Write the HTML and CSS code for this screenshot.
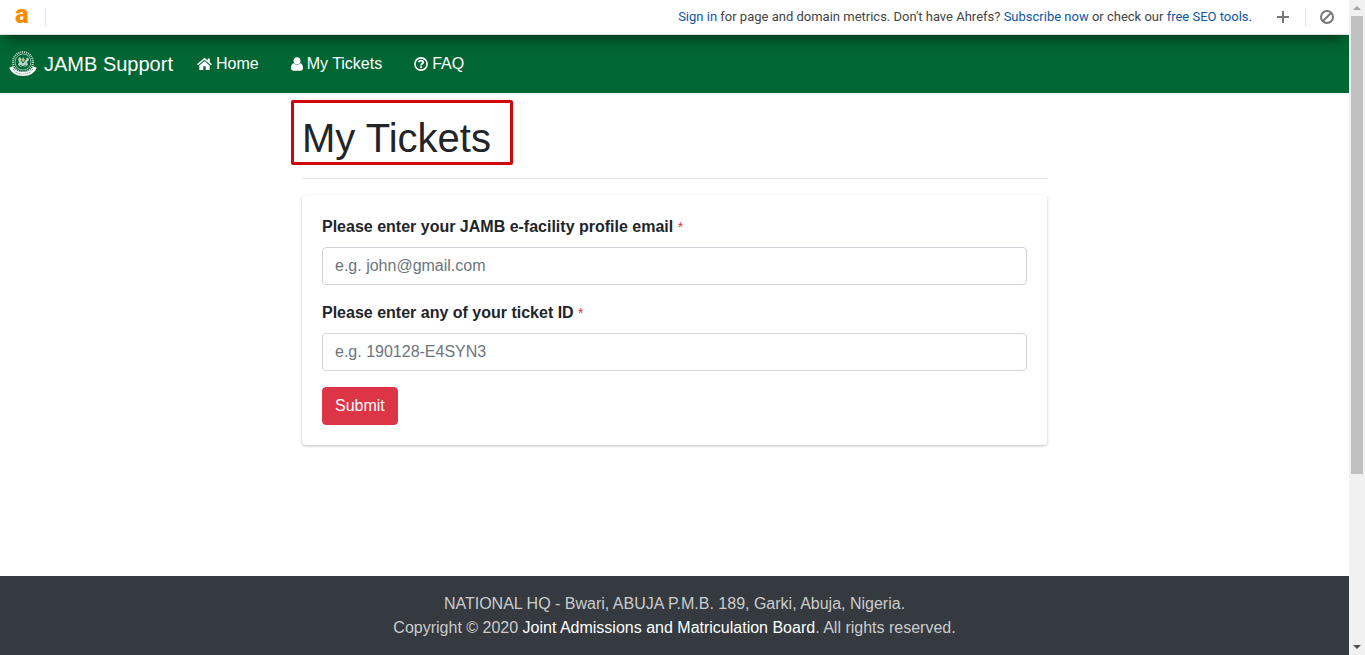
FILE: index.html
```html
<!DOCTYPE html>
<html lang="en">
<head>
    <meta charset="UTF-8">
    <meta name="viewport" content="width=device-width, initial-scale=1.0">
    <title>My Tickets - JAMB Support</title>
    <link rel="stylesheet" href="styles.css">
</head>
<body>

<div class="page">
    <div class="toolbar">
        <a class="toolbar-logo" href="#">a</a>
        <span class="divider"></span>
        <p class="toolbar-text"><a href="#">Sign in</a> for page and domain metrics. Don't have Ahrefs? <a href="#">Subscribe now</a> or check our <a href="#">free SEO tools</a>.</p>
        <button type="button" class="icon-btn" aria-label="Add">
            <svg width="14" height="14" viewBox="0 0 14 14"><path d="M7 1v12M1 7h12" stroke="#777" stroke-width="2"/></svg>
        </button>
        <span class="divider"></span>
        <button type="button" class="icon-btn" aria-label="Disable">
            <svg width="14" height="14" viewBox="0 0 14 14" fill="none" stroke="#777" stroke-width="2"><circle cx="7" cy="7" r="6"/><path d="M3 11l8-8"/></svg>
        </button>
    </div>

    <nav class="navbar">
        <a class="brand" href="#">
            <svg width="28" height="28" viewBox="0 0 28 28" fill="none">
                <circle cx="14" cy="12" r="10" stroke="#cfe0d6" stroke-width="2" stroke-dasharray="1 1"/>
                <circle cx="14" cy="12" r="8" stroke="#8fb8a1"/>
                <path d="M9 9l2-2 2 3 1-3 2 3 3-3 1 3-2 2 1 3-3 2h-4l-3-2 1-3z" fill="#b9d2c3"/>
                <path d="M12 10l2 3 3-4M11 15l3 2 3-2" stroke="#063"/>
                <circle cx="14" cy="10" r="1" fill="#e6b04a"/>
                <path d="M2 17c2 5 7 7 12 7s10-2 12-7" stroke="#fff" stroke-width="4"/>
                <path d="M4 19c3 4 6 5 10 5s7-1 10-5" stroke="#4d8767" stroke-dasharray="1 1"/>
            </svg>
            JAMB Support
        </a>
        <ul class="nav">
            <li><a href="#">
                <svg width="15" height="14" viewBox="0 0 15 14" fill="#fff"><path d="M7.500 0.800L0 7.200l1 1.100 6.500-5.500L14 8.300l1-1.100-2.200-1.900V1.500h-2v2.100zM7.500 4L2.300 8.400V13h4V9.200h2.400V13h4V8.400z"/></svg>
                Home</a></li>
            <li><a href="#">
                <svg width="12" height="14" viewBox="0 0 12 14" fill="#fff"><circle cx="6" cy="3.700" r="3.500"/><path d="M2.700 6.300C.8 6.700 0 8.700 0 11c0 1.700 1 2.700 2.400 2.700h7.200C11 13.700 12 12.700 12 11c0-2.300-.8-4.300-2.700-4.700-2 1.900-4.600 1.900-6.600 0z"/></svg>
                My Tickets</a></li>
            <li><a href="#">
                <svg width="14" height="14" viewBox="0 0 14 14" fill="none" stroke="#fff"><circle cx="7" cy="7" r="6.100" stroke-width="1.600"/><path d="M4.800 5.300c.3-1.200 1.200-1.600 2.200-1.600 1.200 0 2.200.7 2.200 1.700C9.200 6.800 7.100 6.900 7.100 8.400" stroke-width="1.800"/><path d="M7.100 9.300v1.800" stroke-width="2"/></svg>
                FAQ</a></li>
        </ul>
    </nav>

    <main class="container">
        <h1>My Tickets</h1>
        <hr>
        <form class="card">
            <label for="email">Please enter your JAMB e-facility profile email <span class="required">*</span></label>
            <input type="email" id="email" placeholder="e.g. john@gmail.com">
            <label for="ticket">Please enter any of your ticket ID <span class="required">*</span></label>
            <input type="text" id="ticket" placeholder="e.g. 190128-E4SYN3">
            <button type="submit" class="submit-btn">Submit</button>
        </form>
    </main>

    <footer class="footer">
        <p>NATIONAL HQ - Bwari, ABUJA P.M.B. 189, Garki, Abuja, Nigeria.</p>
        <p>Copyright © 2020 <a href="#">Joint Admissions and Matriculation Board</a>. All rights reserved.</p>
    </footer>
</div>

<div class="scrollbar" aria-hidden="true">
    <svg width="16" height="16" viewBox="0 0 16 16"><path d="M4 10l4-4 4 4z" fill="#a3a3a3"/></svg>
    <div class="track"><div class="thumb"></div></div>
    <svg width="16" height="16" viewBox="0 0 16 16"><path d="M4 6l4 4 4-4z" fill="#505050"/></svg>
</div>

</body>
</html>
```
FILE: styles.css
```css
* {
    box-sizing: border-box;
}
body {
    margin: 0;
    display: flex;
    min-height: 100vh;
    font-family: "Liberation Sans", Arial, sans-serif;
    font-size: 16px;
    line-height: 24px;
    color: #212529;
    background-color: #fff;
}
a {
    text-decoration: none;
}
p {
    margin: 0;
}
.page {
    flex: 1;
    min-width: 0;
    display: flex;
    flex-direction: column;
    overflow-x: clip;
}
.toolbar {
    position: relative;
    z-index: 1;
    display: flex;
    align-items: center;
    height: 35px;
    padding: 0 15px;
    background-color: #fff;
    border-bottom: 1px solid #ddd;
    box-shadow: 0 8px 14px -6px rgba(0, 0, 0, 0.6);
    font-family: Roboto, sans-serif;
    font-size: 13px;
    color: #444;
}
.toolbar-logo {
    width: 30px;
    padding-bottom: 6px;
    font-size: 26px;
    font-weight: 900;
    line-height: 28px;
    color: #ff8c00;
}
.divider {
    width: 1px;
    height: 19px;
    background-color: #e5e5e5;
}
.toolbar-text {
    margin-left: auto;
    margin-right: 24px;
}
.toolbar-text a {
    color: #0f55a8;
}
.icon-btn {
    display: flex;
    padding: 0;
    border: none;
    background: none;
    cursor: pointer;
}
.icon-btn + .divider {
    margin: 0 14px 0 15px;
}
.navbar {
    display: flex;
    align-items: center;
    height: 58px;
    padding: 0 9px;
    background-color: #006633;
}
.brand {
    display: flex;
    align-items: center;
    gap: 7px;
    margin-right: 16px;
    font-size: 20px;
    color: #fff;
}
.nav {
    display: flex;
    gap: 16px;
    margin: 0;
    padding: 0;
    list-style: none;
}
.nav a {
    display: flex;
    align-items: center;
    gap: 4px;
    padding: 8px;
    color: #fff;
}
.container {
    flex: 1;
    width: 100%;
    max-width: 745px;
    margin: 0 auto;
    padding-top: 21px;
}
h1 {
    position: relative;
    width: fit-content;
    margin: 0;
    font-size: 40px;
    font-weight: 400;
    line-height: 48px;
}
/* highlight box around the title */
h1::after {
    content: "";
    position: absolute;
    top: -14px;
    right: -22px;
    bottom: -3px;
    left: -11px;
    border: 3px solid #d0060a;
    border-radius: 2px;
}
hr {
    margin: 16px 0;
    border: none;
    border-top: 1px solid #e5e5e5;
}
.card {
    padding: 20px;
    border-radius: 4px;
    background-color: #fff;
    box-shadow: 0 1px 3px rgba(0, 0, 0, 0.25);
}
label {
    display: block;
    margin-bottom: 8px;
    font-weight: 700;
}
.required {
    font-size: 14px;
    font-weight: 400;
    line-height: 20px;
    color: #dc3545;
}
input {
    display: block;
    width: 100%;
    height: 38px;
    margin-bottom: 16px;
    padding: 6px 12px;
    border: 1px solid #ced4da;
    border-radius: 4px;
    font: inherit;
    background-color: #fff;
}
input::placeholder {
    color: #6c757d;
    opacity: 1;
}
.submit-btn {
    display: block;
    padding: 6px 12px;
    border: 1px solid #dc3545;
    border-radius: 4px;
    font: inherit;
    color: #fff;
    background-color: #dc3545;
    cursor: pointer;
}
.submit-btn:hover {
    background-color: #c82333;
}
.footer {
    padding: 16px 0 15px;
    text-align: center;
    color: #ccc;
    background-color: #343a40;
}
.footer a {
    color: #fff;
}
.scrollbar {
    display: flex;
    flex-direction: column;
    width: 16px;
    background-color: #f1f1f1;
}
.track {
    flex: 1;
    padding: 0 2px;
}
.thumb {
    height: 73.5%;
    background-color: #c1c1c1;
}
```
